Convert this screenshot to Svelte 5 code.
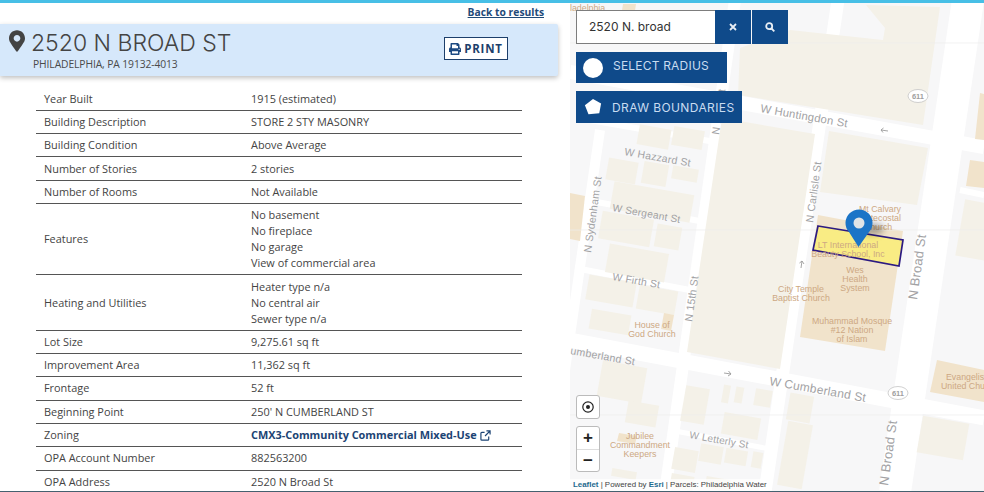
<script lang="ts">
  type Row = { label: string; lines: string[]; link?: boolean };

  const rows: Row[] = [
    { label: 'Year Built', lines: ['1915 (estimated)'] },
    { label: 'Building Description', lines: ['STORE 2 STY MASONRY'] },
    { label: 'Building Condition', lines: ['Above Average'] },
    { label: 'Number of Stories', lines: ['2 stories'] },
    { label: 'Number of Rooms', lines: ['Not Available'] },
    { label: 'Features', lines: ['No basement', 'No fireplace', 'No garage', 'View of commercial area'] },
    { label: 'Heating and Utilities', lines: ['Heater type n/a', 'No central air', 'Sewer type n/a'] },
    { label: 'Lot Size', lines: ['9,275.61 sq ft'] },
    { label: 'Improvement Area', lines: ['11,362 sq ft'] },
    { label: 'Frontage', lines: ['52 ft'] },
    { label: 'Beginning Point', lines: ["250' N CUMBERLAND ST"] },
    { label: 'Zoning', lines: ['CMX3-Community Commercial Mixed-Use'], link: true },
    { label: 'OPA Account Number', lines: ['882563200'] },
    { label: 'OPA Address', lines: ['2520 N Broad St'] }
  ];

  // map geometry is in page coordinates, see the svg viewBox
  const roads = [
    [570, 72, 984, 147, 14],
    [570, 340, 984, 418, 15],
    [968, 0, 895, 492, 32],
    [735, 0, 665, 492, 12],
    [838, 0, 765, 492, 13],
    [600, 130, 565, 370, 10],
    [590, 120, 715, 142, 6],
    [575, 198, 705, 222, 6],
    [575, 268, 700, 292, 6],
    [670, 430, 775, 450, 5],
    [960, 190, 984, 195, 6]
  ];

  const blocks = [
    '738,95 923,125 940,7 866,5 885,28 883,40 790,30 740,48',
    '722,118 815,134 780,369 687,352',
    '829,131 928,148 917,205 820,192'
  ];

  const houses = [
    [654, 137, 32, 20], [688, 138, 31, 19], [622, 171, 30, 22], [655, 174, 25, 22], [685, 174, 26, 13],
    [652, 202, 81, 28], [626, 229, 52, 28], [668, 237, 25, 23], [637, 263, 60, 29], [611, 291, 48, 25],
    [657, 300, 39, 24], [610, 322, 40, 20], [622, 382, 45, 36], [642, 414, 31, 22], [695, 405, 24, 36],
    [726, 394, 7, 18], [739, 395, 8, 16], [763, 398, 17, 17], [741, 426, 37, 22], [685, 460, 24, 22],
    [711, 454, 23, 18], [736, 457, 22, 15], [757, 460, 10, 16], [800, 408, 24, 27], [795, 455, 25, 65],
    [624, 474, 25, 8], [682, 482, 23, 14], [718, 484, 25, 12], [943, 438, 47, 37], [975, 230, 30, 57]
  ];

  const tans = [
    '818,215 903,231 885,351 800,337',
    '570,193 585,196 580,241 570,239',
    '970,160 984,162 984,188 966,186',
    '980,93 984,94 984,140 975,139',
    '937,360 984,370 984,402 930,392',
    '664,313 674,315 671,331 661,329',
    '619,433 637,436 635,444 617,441',
    '623,4 636,4 634,17 621,17'
  ];

  const streets = [
    { t: 'W Huntingdon St', x: 760, y: 112, r: 10, s: 11.3 },
    { t: 'W Hazzard St', x: 624, y: 155, r: 10, s: 10.5 },
    { t: 'W Sergeant St', x: 612, y: 211, r: 10, s: 10.2 },
    { t: 'W Firth St', x: 612, y: 280, r: 10, s: 10.4 },
    { t: 'N Sydenham St', x: 591, y: 253, r: -82, s: 10.6 },
    { t: 'N 15th St', x: 692, y: 322, r: -82, s: 10.6 },
    { t: 'N 15th St', x: 719, y: 135, r: -82, s: 10.6 },
    { t: 'N Carlisle St', x: 813, y: 223, r: -82, s: 10.6 },
    { t: 'N Broad St', x: 917, y: 300, r: -82, s: 13 },
    { t: 'N Broad St', x: 888, y: 486, r: -82, s: 13 },
    { t: 'umberland St', x: 570, y: 354, r: 10, s: 10.6 },
    { t: 'W Cumberland St', x: 769, y: 385, r: 10, s: 12 },
    { t: 'W Letterly St', x: 689, y: 438, r: 10, s: 10 }
  ];

  const pois = [
    { t: 'Mt Calvary', x: 880, y: 212 },
    { t: 'Pentecostal', x: 878, y: 221 },
    { t: 'Church', x: 878, y: 230 },
    { t: 'LT International', x: 848, y: 248 },
    { t: 'Beauty School, Inc', x: 848, y: 257 },
    { t: 'Wes', x: 855, y: 273 },
    { t: 'Health', x: 855, y: 282 },
    { t: 'System', x: 855, y: 291 },
    { t: 'City Temple', x: 801, y: 292 },
    { t: 'Baptist Church', x: 801, y: 301 },
    { t: 'House of', x: 652, y: 328 },
    { t: 'God Church', x: 652, y: 337 },
    { t: 'Muhammad Mosque', x: 852, y: 323.5 },
    { t: '#12 Nation', x: 852, y: 332.5 },
    { t: 'of Islam', x: 852, y: 341.5 },
    { t: 'Jubilee', x: 640, y: 439 },
    { t: 'Commandment', x: 640, y: 448 },
    { t: 'Keepers', x: 640, y: 457 }
  ];

  const poisLeft = [
    { t: 'ladelphia', x: 570, y: 11 },
    { t: 'Evangelis', x: 946, y: 380 },
    { t: 'United Chu', x: 941, y: 389 }
  ];
</script>

<div class="page">
  <main class="details">
    <a class="back" href="#results">Back to results</a>
    <header class="band">
      <svg class="pin" viewBox="0 0 384 512" aria-hidden="true">
        <path d="M172.268 501.67C26.97 291.031 0 268.413 0 192 0 85.961 85.961 0 192 0s192 85.961 192 192c0 76.413-26.97 99.031-172.268 309.67-9.535 13.774-29.93 13.773-39.464 0zM192 272c44.183 0 80-35.817 80-80s-35.817-80-80-80-80 35.817-80 80 35.817 80 80 80z" />
      </svg>
      <div class="address">
        <h1>2520 N BROAD ST</h1>
        <p>PHILADELPHIA, PA 19132-4013</p>
      </div>
      <button class="print">
        <svg viewBox="0 0 512 512" aria-hidden="true">
          <path d="M448 192V77.25c0-8.49-3.37-16.62-9.37-22.63L393.37 9.37c-6-6-14.14-9.37-22.63-9.37H96C78.33 0 64 14.33 64 32v160c-35.35 0-64 28.65-64 64v112c0 8.84 7.16 16 16 16h48v96c0 17.67 14.33 32 32 32h320c17.67 0 32-14.33 32-32v-96h48c8.84 0 16-7.16 16-16V256c0-35.35-28.65-64-64-64zm-64 256H128v-96h256v96zm0-224H128V64h192v48c0 8.84 7.16 16 16 16h48v96zm48 72c-13.25 0-24-10.75-24-24 0-13.26 10.75-24 24-24s24 10.74 24 24c0 13.25-10.75 24-24 24z" />
        </svg>
        PRINT
      </button>
    </header>

    <div class="table">
      {#each rows as row}
        <div class="row">
          <div class="label">{row.label}</div>
          <div>
            {#each row.lines as line}
              {#if row.link}
                <a class="zoning" href="#zoning">
                  {line}
                  <svg viewBox="0 0 12 12" aria-hidden="true">
                    <path d="M9.5 7v3a1 1 0 0 1-1 1H2a1 1 0 0 1-1-1V3.5a1 1 0 0 1 1-1h3M7 1h4v4M11 1 5.5 6.5" />
                  </svg>
                </a>
              {:else}
                <div>{line}</div>
              {/if}
            {/each}
          </div>
        </div>
      {/each}
    </div>
  </main>

  <section class="map">
    <svg class="tiles" viewBox="570 0 414 492" aria-hidden="true">
      {#each roads as [x1, y1, x2, y2, w]}
        <line {x1} {y1} {x2} {y2} stroke="#fff" stroke-width={w} />
      {/each}
      {#each blocks as points}
        <polygon {points} fill="#f4f1e8" />
      {/each}
      {#each houses as [cx, cy, w, h]}
        <rect x={cx - w / 2} y={cy - h / 2} width={w} height={h} fill="#f4f1e8" transform={`rotate(10 ${cx} ${cy})`} />
      {/each}
      {#each tans as points}
        <polygon {points} fill="#f1e3cb" />
      {/each}
      <line x1="570" y1="43" x2="984" y2="43" class="seam" />
      <line x1="570" y1="230" x2="984" y2="230" class="seam" />
      <line x1="570" y1="415" x2="984" y2="415" class="seam" />

      {#each streets as s}
        <text class="street" x={s.x} y={s.y} font-size={s.s} transform={`rotate(${s.r} ${s.x} ${s.y})`}>{s.t}</text>
      {/each}

      <g class="shield">
        <ellipse cx="918" cy="96" rx="10" ry="6.5" />
        <text x="918" y="99">611</text>
        <ellipse cx="898" cy="393" rx="10" ry="6.5" />
        <text x="898" y="396">611</text>
      </g>

      <path class="arrow" d="M888 131l-7-1m2.5-2-2.5 2 2 2.5" />
      <path class="arrow" d="M801 268l1-7m-2.5 2 2.5-2 2 3" />
      <path class="arrow" d="M724 373l7 1m-2.5-3 2.5 3-3 2" />

      <polygon class="parcel" points="818,226 903,240 899,266 813,250" />

      {#each pois as p}
        <text class="poi" x={p.x} y={p.y}>{p.t}</text>
      {/each}
      {#each poisLeft as p}
        <text class="poi start" x={p.x} y={p.y}>{p.t}</text>
      {/each}

      <ellipse cx="872" cy="229" rx="12" ry="6" class="marker-shadow" />
      <path class="marker" d="M858.5 247 849 232a13.5 13.5 0 1 1 20 0z" />
      <circle cx="859" cy="223" r="5.5" fill="#dfe3e6" />
    </svg>

    <div class="controls">
      <div class="search">
        <div class="query">2520 N. broad</div>
        <button class="square" aria-label="Clear">
          <svg viewBox="0 0 10 10"><path d="M2 2l6 6M8 2l-6 6" /></svg>
        </button>
        <button class="square" aria-label="Search">
          <svg viewBox="0 0 10 10"><circle cx="4.2" cy="4.2" r="3" /><path d="M6.5 6.5 9.3 9.3" /></svg>
        </button>
      </div>
      <button class="tool radius">
        <span class="dot"></span>
        SELECT RADIUS
      </button>
      <button class="tool draw">
        <svg viewBox="0 0 20 20" aria-hidden="true"><polygon points="10,1 19,6 17,17 5,18 1,8" fill="#fff" /></svg>
        DRAW BOUNDARIES
      </button>
    </div>

    <div class="leaflet">
      <button class="locate" aria-label="Locate">
        <svg viewBox="0 0 14 14"><circle cx="7" cy="7" r="5.2" /><circle class="core" cx="7" cy="7" r="2" /></svg>
      </button>
      <div class="zoom">
        <button>+</button>
        <button>−</button>
      </div>
    </div>

    <div class="attribution">
      <a href="#leaflet">Leaflet</a> | Powered by <a href="#esri">Esri</a> | Parcels: Philadelphia Water
    </div>
  </section>
</div>

<style>
  :global(body) {
    margin: 0;
    background: #fff;
  }

  .page {
    display: flex;
    width: 984px;
    height: 492px;
    box-sizing: border-box;
    overflow: hidden;
    border-top: 3px solid #47bfe6;
    border-bottom: 1px solid #45606f;
    font-family: 'Open Sans', sans-serif;
    color: #444;
  }

  .details {
    width: 570px;
    flex: none;
    display: flex;
    flex-direction: column;
    overflow: hidden;
  }

  .back {
    align-self: flex-end;
    flex: none;
    margin-right: 26px;
    height: 21px;
    font-size: 10.3px;
    line-height: 18px;
    font-weight: 700;
    color: #1f4a78;
  }

  .band {
    width: 558px;
    height: 52px;
    flex: none;
    box-sizing: border-box;
    display: flex;
    align-items: flex-start;
    padding: 6px 50px 0 9px;
    background: #d6e8fb;
    box-shadow: 0 2px 5px rgba(0, 0, 0, 0.25);
    border-radius: 0 2px 2px 0;
  }

  .pin {
    width: 16px;
    height: 22px;
    margin-right: 7px;
    fill: #444;
    flex: none;
  }

  .address {
    flex: 1;
  }

  h1 {
    margin: 0 0 0 -1px;
    font-family: Inter, sans-serif;
    font-weight: 300;
    font-size: 23px;
    line-height: 26px;
    color: #444;
  }

  .address p {
    margin: 1px 0 0 1px;
    font-size: 10.3px;
    line-height: 14px;
    letter-spacing: -0.1px;
    color: #4a4a4a;
  }

  .print {
    margin-top: 7px;
    width: 64px;
    height: 23px;
    display: flex;
    align-items: center;
    justify-content: center;
    gap: 3px;
    padding: 0;
    background: #fff;
    border: 1px solid #1d3f6b;
    font: 700 11.5px 'Open Sans', sans-serif;
    letter-spacing: 0.8px;
    color: #1d3f6b;
  }

  .print svg {
    width: 12px;
    height: 12px;
    fill: #1d4a82;
  }

  .table {
    flex: none;
    width: 486px;
    margin: 11.5px 0 0 36px;
    font-size: 10.9px;
    line-height: 16px;
  }

  .row {
    display: grid;
    grid-template-columns: 207px 1fr;
    align-items: center;
    padding: 3.17px 8px;
    border-bottom: 1px solid #555;
  }

  .row:last-child {
    border-bottom: 0;
  }

  .zoning {
    display: inline-flex;
    align-items: center;
    gap: 3px;
    font-weight: 700;
    color: #1c4474;
    text-decoration: none;
  }

  .zoning svg {
    width: 11px;
    height: 11px;
    fill: none;
    stroke: #1c4474;
    stroke-width: 1.3;
  }

  .map {
    position: relative;
    flex: 1;
    background: #f7f7f8;
    overflow: hidden;
  }

  .tiles {
    position: absolute;
    left: 0;
    top: -3px;
    width: 414px;
    height: 492px;
  }

  .seam {
    stroke: #ececec;
    stroke-width: 0.7;
  }

  .street {
    font-family: 'Liberation Sans', sans-serif;
    fill: #a2a2a4;
    letter-spacing: 0.2px;
  }

  .poi {
    font-family: 'Liberation Sans', sans-serif;
    font-size: 8.8px;
    fill: #cda883;
    text-anchor: middle;
  }

  .poi.start {
    text-anchor: start;
  }

  .shield ellipse {
    fill: #fff;
    stroke: #c4c4c4;
    stroke-width: 0.8;
  }

  .shield text {
    font-family: 'Liberation Sans', sans-serif;
    font-size: 7.5px;
    font-weight: 700;
    fill: #a0a0a0;
    text-anchor: middle;
  }

  .arrow {
    fill: none;
    stroke: #9b9b9b;
    stroke-width: 0.9;
  }

  .parcel {
    fill: #f9ec84;
    stroke: #2c1a82;
    stroke-width: 1.7;
  }

  .marker {
    fill: #1b74c7;
  }

  .marker-shadow {
    fill: rgba(0, 0, 0, 0.3);
    filter: blur(3px);
  }

  .controls {
    position: absolute;
    left: 6px;
    top: 7px;
    display: flex;
    flex-direction: column;
    align-items: flex-start;
    gap: 8px;
    font-family: Inter, sans-serif;
  }

  .search {
    display: flex;
    height: 34px;
  }

  .query {
    width: 139px;
    box-sizing: border-box;
    padding-left: 12px;
    background: #fff;
    border: 1px solid #7d7d7d;
    border-right: 0;
    font-size: 12px;
    line-height: 32px;
    color: #333;
  }

  .square {
    width: 36px;
    margin-right: 1px;
    padding: 0;
    border: 0;
    background: #0f4a8a;
    display: grid;
    place-items: center;
  }

  .square svg {
    width: 10px;
    height: 10px;
    fill: none;
    stroke: #e8eef5;
    stroke-width: 1.8;
  }

  .tool {
    display: flex;
    align-items: center;
    padding: 0;
    border: 0;
    background: #0f4a8a;
    color: #c9dcf1;
    font: 400 12px Inter, sans-serif;
    letter-spacing: 0.4px;
  }

  .radius {
    width: 151px;
    height: 31px;
    padding: 6px 0 0 7px;
    gap: 10px;
    align-items: flex-start;
    box-sizing: border-box;
    letter-spacing: 0.2px;
  }

  .dot {
    width: 20px;
    height: 20px;
    border-radius: 50%;
    background: #fff;
  }

  .draw {
    width: 166px;
    height: 32px;
    padding-left: 8px;
    gap: 10px;
    box-sizing: border-box;
  }

  .draw svg {
    width: 18px;
    height: 18px;
  }

  .leaflet {
    position: absolute;
    left: 6px;
    bottom: 19px;
    display: flex;
    flex-direction: column;
    gap: 7px;
  }

  .locate,
  .zoom {
    width: 24px;
    box-sizing: border-box;
    background: #fff;
    border: 1px solid #bbb;
    border-radius: 3px;
  }

  .locate {
    height: 24px;
    padding: 0;
    display: grid;
    place-items: center;
  }

  .locate svg {
    width: 14px;
    height: 14px;
    fill: none;
    stroke: #222;
    stroke-width: 1.2;
  }

  .locate .core {
    fill: #222;
    stroke: none;
  }

  .zoom {
    height: 46px;
    display: flex;
    flex-direction: column;
  }

  .zoom button {
    flex: 1;
    padding: 0;
    border: 0;
    background: none;
    font: 700 17px/1 'Liberation Sans', sans-serif;
    color: #222;
  }

  .zoom button:first-child {
    border-bottom: 1px solid #ddd;
  }

  .attribution {
    position: absolute;
    left: 0;
    bottom: 0;
    padding: 0 3px;
    height: 12px;
    background: rgba(255, 255, 255, 0.7);
    font: 7.9px/12px 'Liberation Sans', sans-serif;
    color: #444;
  }

  .attribution a {
    color: #1d6a8f;
    font-weight: 700;
    text-decoration: none;
  }
</style>
